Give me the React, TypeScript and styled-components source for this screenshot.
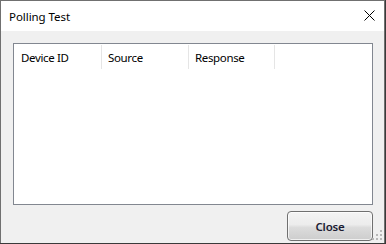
import React from "react";
import styled, { createGlobalStyle } from "styled-components";

const Global = createGlobalStyle`
  html, body { margin: 0; padding: 0; background: #3a3a3a; }
  body { font-family: "Noto Sans", "Open Sans", sans-serif; font-size: 12px; }
  * { box-sizing: border-box; }
`;

const Window = styled.div`
  width: 385px;
  height: 243px;
  border: 1px solid #707070;
  border-bottom: none;
  background: #f0f0f0;
  display: flex;
  flex-direction: column;
`;

const TitleBar = styled.div`
  height: 30px;
  background: #ffffff;
  display: flex;
  align-items: center;
  justify-content: space-between;
  padding: 0 8px 0 8px;
  flex: none;
`;

const Title = styled.span`
  font-size: 11.5px;
  color: #000;
  letter-spacing: -0.05px;
`;

const CloseX = styled.svg`
  width: 11px;
  height: 11px;
  margin-right: 1px;
  margin-top: -1px;
`;

const Body = styled.div`
  flex: 1;
  display: flex;
  flex-direction: column;
  padding: 12px 11px 2px 12px;
  gap: 6px;
`;

const ListView = styled.div`
  height: 162px;
  border: 1px solid #828790;
  background: #ffffff;
  display: flex;
  flex-direction: column;
`;

const HeaderRow = styled.div`
  display: flex;
  height: 25px;
`;

const HeaderCell = styled.div<{ $w: number }>`
  width: ${(p) => p.$w}px;
  border-right: 1px solid #e5e5e5;
  margin-top: 1px;
  padding-left: ${(p) => (p.$w > 87 ? 7 : 6)}px;
  display: flex;
  align-items: center;
  font-size: 11.5px;
  color: #000;
  letter-spacing: -0.35px;
`;

const Footer = styled.div`
  display: flex;
  justify-content: flex-end;
  position: relative;
`;

const Button = styled.button`
  width: 86px;
  height: 30px;
  border: 1px solid #707070;
  border-radius: 4px;
  background: linear-gradient(#f4f4f4 0%, #ececec 45%, #dcdcdc 55%, #cdcdcd 100%);
  box-shadow: inset 0 0 0 1px rgba(255, 255, 255, 0.7);
  font-family: "Noto Sans", "Open Sans", sans-serif;
  font-size: 11.5px;
  font-weight: 600;
  color: #1b1b33;
  letter-spacing: -0.2px;
  padding: 0;
`;

const Grip = styled.svg`
  position: absolute;
  right: -10px;
  bottom: 0px;
  width: 11px;
  height: 11px;
`;

export default function App() {
  const dots = [
    [8, 0],
    [4, 4],
    [8, 4],
    [0, 8],
    [4, 8],
    [8, 8],
  ];
  return (
    <>
      <Global />
      <Window>
        <TitleBar>
          <Title>Polling Test</Title>
          <CloseX viewBox="0 0 11 11">
            <path d="M0.5 0.5 L10.5 10.5 M10.5 0.5 L0.5 10.5" stroke="#000" strokeWidth="1" fill="none" />
          </CloseX>
        </TitleBar>
        <Body>
          <ListView>
            <HeaderRow>
              <HeaderCell $w={88}>Device ID</HeaderCell>
              <HeaderCell $w={87}>Source</HeaderCell>
              <HeaderCell $w={86}>Response</HeaderCell>
            </HeaderRow>
          </ListView>
          <Footer>
            <Button>Close</Button>
            <Grip viewBox="0 0 11 11">
              {dots.map(([x, y], i) => (
                <rect key={i} x={x} y={y} width="2" height="2" fill="#b8b8b8" />
              ))}
            </Grip>
          </Footer>
        </Body>
      </Window>
    </>
  );
}
